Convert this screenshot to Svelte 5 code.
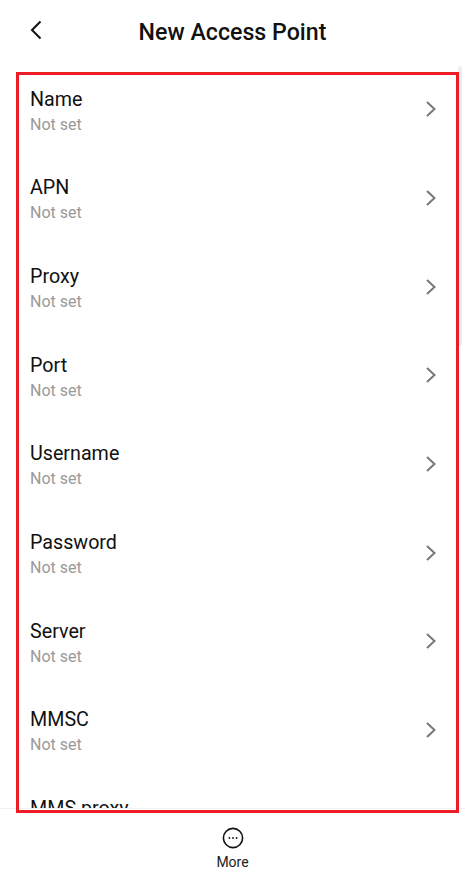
<script>
  const fields = ["Name", "APN", "Proxy", "Port", "Username", "Password", "Server", "MMSC", "MMS proxy"];
</script>

<div class="screen">
  <header class="topbar">
    <button class="back" aria-label="Back">
      <svg width="14" height="20" viewBox="0 0 14 20"><path d="M11.5 1.5 3 10l8.5 8.5" /></svg>
    </button>
    <h1>New Access Point</h1>
  </header>

  <div class="list">
    {#each fields as field}
      <div class="row">
        <div class="labels">
          <div class="title">{field}</div>
          <div class="value">Not set</div>
        </div>
        <svg class="chevron" width="12" height="18" viewBox="0 0 12 18"><path d="M2 2l7.5 7-7.5 7" /></svg>
      </div>
    {/each}
    <div class="scrollbar"></div>
  </div>

  <footer class="bottombar">
    <svg width="24" height="24" viewBox="0 0 24 24" class="more-icon">
      <circle cx="12" cy="12" r="9.6" />
      <circle class="dot" cx="8.4" cy="12" r="0.9" />
      <circle class="dot" cx="12" cy="12" r="0.9" />
      <circle class="dot" cx="15.6" cy="12" r="0.9" />
    </svg>
    <span>More</span>
  </footer>

  <div class="highlight"></div>
</div>

<style>
  :global(body) {
    margin: 0;
    background: #fff;
  }

  .screen {
    position: relative;
    width: 465px;
    height: 893px;
    display: flex;
    flex-direction: column;
    overflow: hidden;
    font-family: Roboto, "Liberation Sans", sans-serif;
    color: #000;
    background: #fff;
  }

  .topbar {
    height: 65px;
    flex: none;
    position: relative;
    display: flex;
    align-items: center;
    justify-content: center;
    padding-bottom: 2px;
    box-sizing: border-box;
  }

  .topbar h1 {
    margin: 0;
    font-size: 23.2px;
    font-weight: 500;
    color: #111;
  }

  .back {
    position: absolute;
    left: 29px;
    top: 20px;
    padding: 0;
    border: none;
    background: none;
    line-height: 0;
  }

  .back path {
    fill: none;
    stroke: #111;
    stroke-width: 2;
  }

  .list {
    flex: 1;
    min-height: 0;
    overflow: hidden;
    position: relative;
  }

  .row {
    height: 88.67px;
    display: flex;
    align-items: center;
    justify-content: space-between;
    padding: 0 28px 0 30px;
    box-sizing: border-box;
  }

  .labels {
    padding-top: 5px;
  }

  .title {
    font-size: 19.7px;
    line-height: 25px;
    color: #111;
  }

  .value {
    font-size: 16px;
    line-height: 25px;
    color: #999;
  }

  .chevron path {
    fill: none;
    stroke: #777;
    stroke-width: 2;
  }

  .scrollbar {
    position: absolute;
    right: 3px;
    top: 1px;
    width: 4px;
    height: 280px;
    border-radius: 2px;
    background: #eee;
  }

  .bottombar {
    height: 85px;
    flex: none;
    border-top: 1px solid #f1f1f1;
    box-sizing: border-box;
    display: flex;
    flex-direction: column;
    align-items: center;
    padding-top: 17px;
    font-size: 14px;
    color: #222;
  }

  .more-icon {
    margin-bottom: 4px;
  }

  .more-icon circle {
    fill: none;
    stroke: #111;
    stroke-width: 1.6;
  }

  .more-icon .dot {
    fill: #111;
    stroke: none;
  }

  .highlight {
    position: absolute;
    left: 16px;
    top: 72px;
    width: 443px;
    height: 741px;
    border: 3px solid #ee1c25;
    box-sizing: border-box;
    pointer-events: none;
  }
</style>
